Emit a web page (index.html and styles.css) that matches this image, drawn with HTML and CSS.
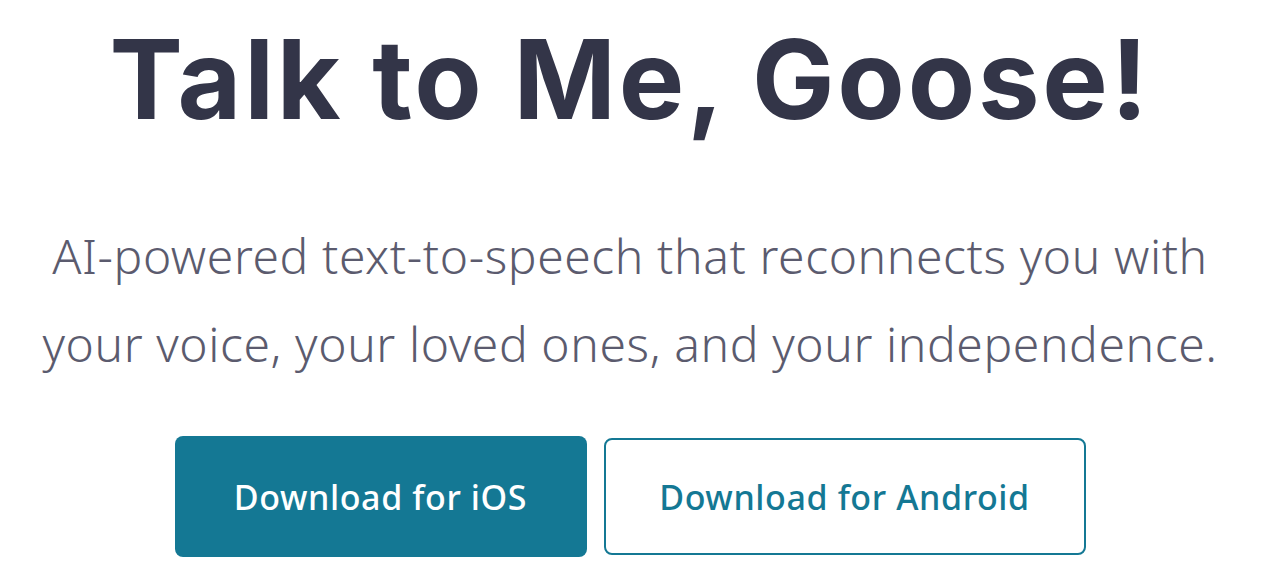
FILE: index.html
```html
<!DOCTYPE html>
<html lang="en">
<head>
<meta charset="utf-8">
<title>Talk to Me, Goose!</title>
<link rel="stylesheet" href="styles.css">
</head>
<body>
<main class="hero">
  <h1 class="hero-title">Talk to Me, Goose!</h1>
  <p class="hero-subtitle">AI-powered text-to-speech that reconnects you with your voice, your loved ones, and your independence.</p>
  <div class="hero-actions">
    <a class="btn btn-primary" href="#">Download for iOS</a>
    <a class="btn btn-outline" href="#">Download for Android</a>
  </div>
</main>
</body>
</html>
```

FILE: styles.css
```css
* { box-sizing: border-box; }
html, body { margin: 0; padding: 0; background: #ffffff; }
body { font-family: "Noto Sans", "DejaVu Sans", sans-serif; }

.hero {
  display: flex;
  flex-direction: column;
  align-items: center;
  padding: 19px 28px 0 0;
  text-align: center;
}

.hero-title {
  margin: 0;
  font-family: Inter, "Noto Sans", sans-serif;
  font-weight: 700;
  font-size: 110px;
  line-height: 120px;
  color: #333548;
  letter-spacing: 2.8px;
}

.hero-subtitle {
  margin: 73px 0 0;
  max-width: 1200px;
  font-family: "Noto Sans", sans-serif;
  font-weight: 300;
  font-size: 48px;
  line-height: 88px;
  color: #5b5b6e;
  letter-spacing: 0.6px;
}

.hero-actions {
  display: flex;
  align-items: center;
  gap: 17px;
  margin-top: 48px;
}

.btn {
  display: flex;
  align-items: center;
  justify-content: center;
  border-radius: 8px;
  font-family: "Noto Sans", sans-serif;
  font-weight: 500;
  font-size: 34px;
  letter-spacing: 0.6px;
  text-decoration: none;
}

.btn-primary {
  width: 412px;
  height: 121px;
  background: #147894;
  color: #ffffff;
}

.btn-outline {
  width: 482px;
  height: 117px;
  border: 2px solid #147894;
  color: #147894;
  background: #ffffff;
}
```
